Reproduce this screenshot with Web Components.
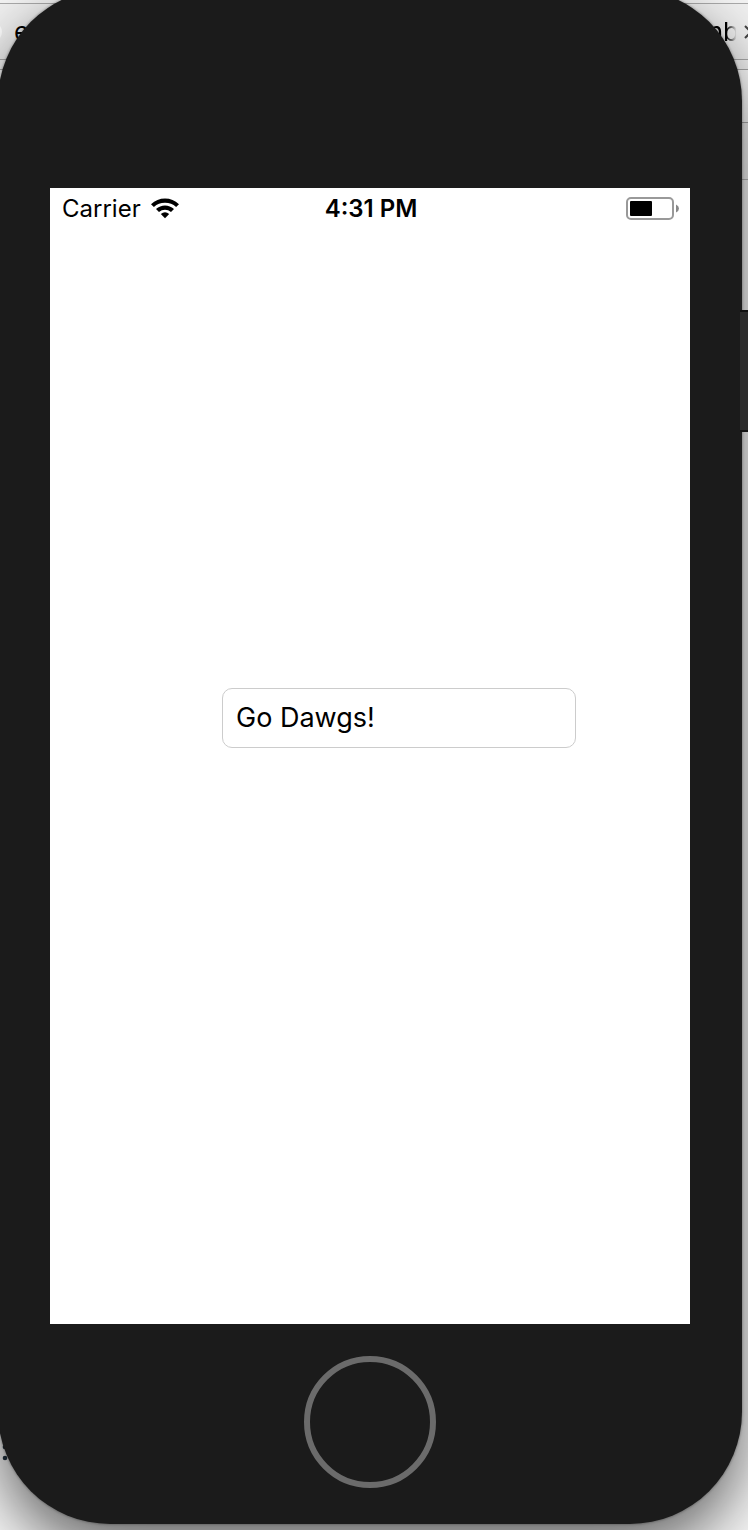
<!DOCTYPE html>
<html lang="en">
<head>
<meta charset="utf-8">
<meta name="viewport" content="width=device-width">
<title>Simulator</title>
<style>
body { margin: 0; font-family: Inter, "Liberation Sans", sans-serif; color: #000; }
</style>
</head>
<body>
<sim-desktop>
  <browser-window slot="backdrop"></browser-window>
  <phone-device>
    <status-bar slot="screen" carrier="Carrier" time="4:31 PM"></status-bar>
    <text-entry slot="screen" label="Message" value="Go Dawgs!"></text-entry>
  </phone-device>
</sim-desktop>
<script>
const define = (name, render) => customElements.define(name, class extends HTMLElement {
  connectedCallback() {
    if (!this.shadowRoot) this.attachShadow({ mode: "open" }).innerHTML = render(this);
  }
});

define("sim-desktop", () => `
<style>
:host { display: grid; grid-template-columns: minmax(0, 1fr); overflow: hidden; min-height: 100vh; background: #fff; }
.layer { grid-area: 1 / 1; min-width: 0; display: grid; }
.front { padding: 0 6px 6px 0; margin: -11px 0 0 -2px; align-content: start; z-index: 1; }
</style>
<div class="layer"><slot name="backdrop"></slot></div>
<div class="layer front"><slot></slot></div>`);

define("browser-window", () => `
<style>
:host { display: flex; flex-direction: column; font-size: 26px; background: #f8f8f8; }
.edge { height: 3px; background: #f4f4f4; border-bottom: 1px solid #aaa; }
.tabs { display: flex; align-items: center; height: 55px; background: #f0f0f0; border-bottom: 1px solid #aaa; }
.dot { width: 20px; height: 20px; border-radius: 50%; background: #fff; margin-left: -18px; margin-right: 12px; }
.tab { color: #000; text-decoration: none; }
.end { margin-left: auto; margin-right: 5px; background: linear-gradient(90deg, #000 60%, transparent 92%); background-clip: text; color: transparent; }
button { padding: 0; border: 0; background: none; width: 14px; height: 14px; margin-right: -10px; }
svg { display: block; }
.gap { height: 9px; background: #f4f4f4; border-bottom: 1px solid #aaa; }
.bar { height: 52px; background: #fff; border-bottom: 1px solid #aaa; }
.sub { height: 56px; background: #f4f4f4; border-bottom: 1px solid #bbb; }
.page { flex: 1; display: flex; flex-direction: column; justify-content: flex-end; align-items: flex-start; }
.more { margin: 0 0 69px 2px; width: 6px; height: 20px; }
</style>
<div class="edge"></div>
<nav class="tabs">
  <span class="dot"></span><a class="tab" href="#">e</a><a class="tab end" href="#">nb</a>
  <button aria-label="Close tab"><svg width="14" height="14" viewBox="0 0 14 14"><path d="M1 1 13 13M13 1 1 13" stroke="#444" stroke-width="2"/></svg></button>
</nav>
<div class="gap"></div><div class="bar"></div><div class="sub"></div>
<div class="page"><button class="more" aria-label="More"><svg width="6" height="20" viewBox="0 0 6 20"><circle cx="3" cy="6" r="2.3" fill="#243442"/><circle cx="3" cy="17" r="2.3" fill="#243442"/></svg></button></div>`);

define("phone-device", () => `
<style>
:host { display: flex; flex-direction: column; align-items: center; position: relative; box-sizing: border-box; padding: 199px 52px 36px; border-radius: 112px; background: #1b1b1b; box-shadow: 0 0 2px 1px rgba(0,0,0,.2), 0 26px 64px rgba(0,0,0,.6); }
.screen { width: 100%; aspect-ratio: 640 / 1136; background: #fff; }
.home { width: 132px; height: 132px; margin: 32px 0 0; padding: 0; border: 6px solid #6b6b6b; border-radius: 50%; background: none; }
.power { position: absolute; right: -8px; top: 321px; width: 10px; height: 122px; padding: 0; border: solid #111; border-width: 2px 0; background: #2b2b2b; }
</style>
<main class="screen"><slot name="screen"></slot></main>
<button class="home" aria-label="Home"></button>
<button class="power" aria-label="Power"></button>`);

define("status-bar", el => `
<style>
:host { display: grid; grid-template-columns: 1fr auto 1fr; align-items: center; height: 42px; padding: 0 10px 0 12px; font-size: 24px; line-height: 42px; }
.left { display: flex; align-items: center; gap: 10px; }
.time { font-weight: 600; }
.battery { justify-self: end; }
svg { display: block; }
</style>
<div class="left"><span>${el.getAttribute("carrier")}</span>
<svg width="28" height="22" viewBox="0 0 28 22"><path d="M0 6.2Q6 .6 14 .6T28 6.2L25.1 9Q20.5 4.8 14 4.8T2.9 9Z"/><path d="M5 11.1Q9 7.4 14 7.4T23 11.1L20 14.1Q17.4 11.7 14 11.7T8 14.1Z"/><path d="M9.8 16Q14 12.6 18.2 16L14 20.3Z"/></svg></div>
<span class="time">${el.getAttribute("time")}</span>
<svg class="battery" width="54" height="24" viewBox="0 0 54 24"><rect x="1" y="1" width="46" height="21" rx="4" fill="none" stroke="#999" stroke-width="2"/><rect x="4" y="4" width="22" height="15" rx="1"/><path d="M50 7.5Q53 9 53 11.5T50 15.5Z" fill="#888"/></svg>`);

define("text-entry", el => `
<style>
:host { display: block; padding: 458px 114px 0 172px; }
input { display: block; box-sizing: border-box; width: 100%; height: 60px; padding: 0 13px 2px; border: 1px solid #ccc; border-radius: 10px; background: #fff; color: #000; font: 27px/34px Inter, "Liberation Sans", sans-serif; outline: 0; }
</style>
<input type="text" aria-label="${el.getAttribute("label")}" value="${el.getAttribute("value")}">`);
</script>
</body>
</html>
